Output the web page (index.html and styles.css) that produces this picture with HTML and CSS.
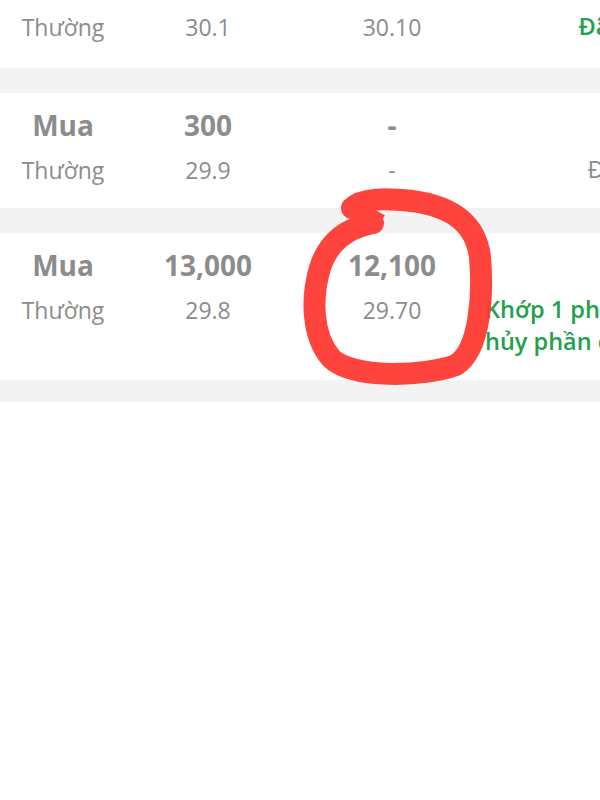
FILE: index.html
```html
<!DOCTYPE html>
<html lang="vi">
<head>
  <meta charset="UTF-8" />
  <meta name="viewport" content="width=device-width, initial-scale=1.0"/>
  <title>Sổ lệnh</title>
  <link rel="stylesheet" href="styles.css">
</head>
<body>
  <div class="screen">
    <div class="list">
      <!-- first order is scrolled, only its second line shows -->
      <div class="order cut">
        <div class="cell type">Thường</div>
        <div class="cell price">30.1</div>
        <div class="cell avg">30.10</div>
        <div class="cell status done">Đã khớp</div>
      </div>
      <div class="order">
        <div class="cell side">Mua</div>
        <div class="cell qty">300</div>
        <div class="cell matched">-</div>
        <div class="cell"></div>
        <div class="cell type">Thường</div>
        <div class="cell price">29.9</div>
        <div class="cell avg">-</div>
        <div class="cell status">Đã hủy</div>
      </div>
      <div class="order">
        <div class="cell side">Mua</div>
        <div class="cell qty">13,000</div>
        <div class="cell matched">12,100</div>
        <div class="cell"></div>
        <div class="cell type">Thường</div>
        <div class="cell price">29.8</div>
        <div class="cell avg">29.70</div>
        <div class="cell status done long">Khớp 1 phần,<br>hủy phần còn lại</div>
      </div>
    </div>

    <!-- hand-drawn mark over the screenshot -->
    <svg class="scribble" width="600" height="800" viewBox="0 0 600 800">
      <path d="M373,223 C347,228 328,242 320,268 C311,298 312,336 331,358 C352,379 424,377 456,365 C481,349 483,292 480,257 C476,226 456,207 412,201 C386,198 362,198 352,208"
            fill="none" stroke="#ff3b33" stroke-width="22" stroke-linecap="round" stroke-linejoin="round"/>
      <path d="M362,214 L380,224" fill="none" stroke="#ff3b33" stroke-width="20" stroke-linecap="butt"/>
    </svg>
  </div>
</body>
</html>
```

FILE: styles.css
```css
:root {
  --text: #8c8c8c;
  --green: #23a04c;
  --sep: #f3f3f3;
  --white: #ffffff;
}

* {
  box-sizing: border-box;
}

body {
  margin: 0;
  background-color: var(--white);
  font-family: 'Open Sans', 'Noto Sans', sans-serif;
  color: var(--text);
  overflow: hidden;
}

.screen {
  position: relative;
  width: 600px;
  height: 800px;
  overflow: hidden;
}

.list {
  display: flex;
  flex-direction: column;
  gap: 25px;
  background-color: var(--sep);
  padding-bottom: 22px;
}

.order {
  display: grid;
  grid-template-columns: 126px 184px 164px 304px;
  grid-template-rows: 44px auto;
  padding: 10px 0 15px;
  background-color: var(--white);
}

.order.cut {
  grid-template-rows: auto;
  padding: 4px 0 18px;
}

.cell {
  text-align: center;
  white-space: nowrap;
}

.side,
.qty,
.matched {
  font-size: 28px;
  font-weight: 700;
  line-height: 44px;
}

.type,
.price,
.avg {
  font-size: 23px;
  line-height: 46px;
}

.qty,
.price {
  padding-right: 20px;
}

.status {
  font-size: 23.5px;
  line-height: 32px;
  padding: 6px 11px 8px;
}

.status.done {
  color: var(--green);
  font-weight: 600;
}

.status.long {
  text-align: left;
}

.scribble {
  position: absolute;
  top: 0;
  left: 0;
  opacity: 0.95;
  filter: blur(0.6px);
}
```
